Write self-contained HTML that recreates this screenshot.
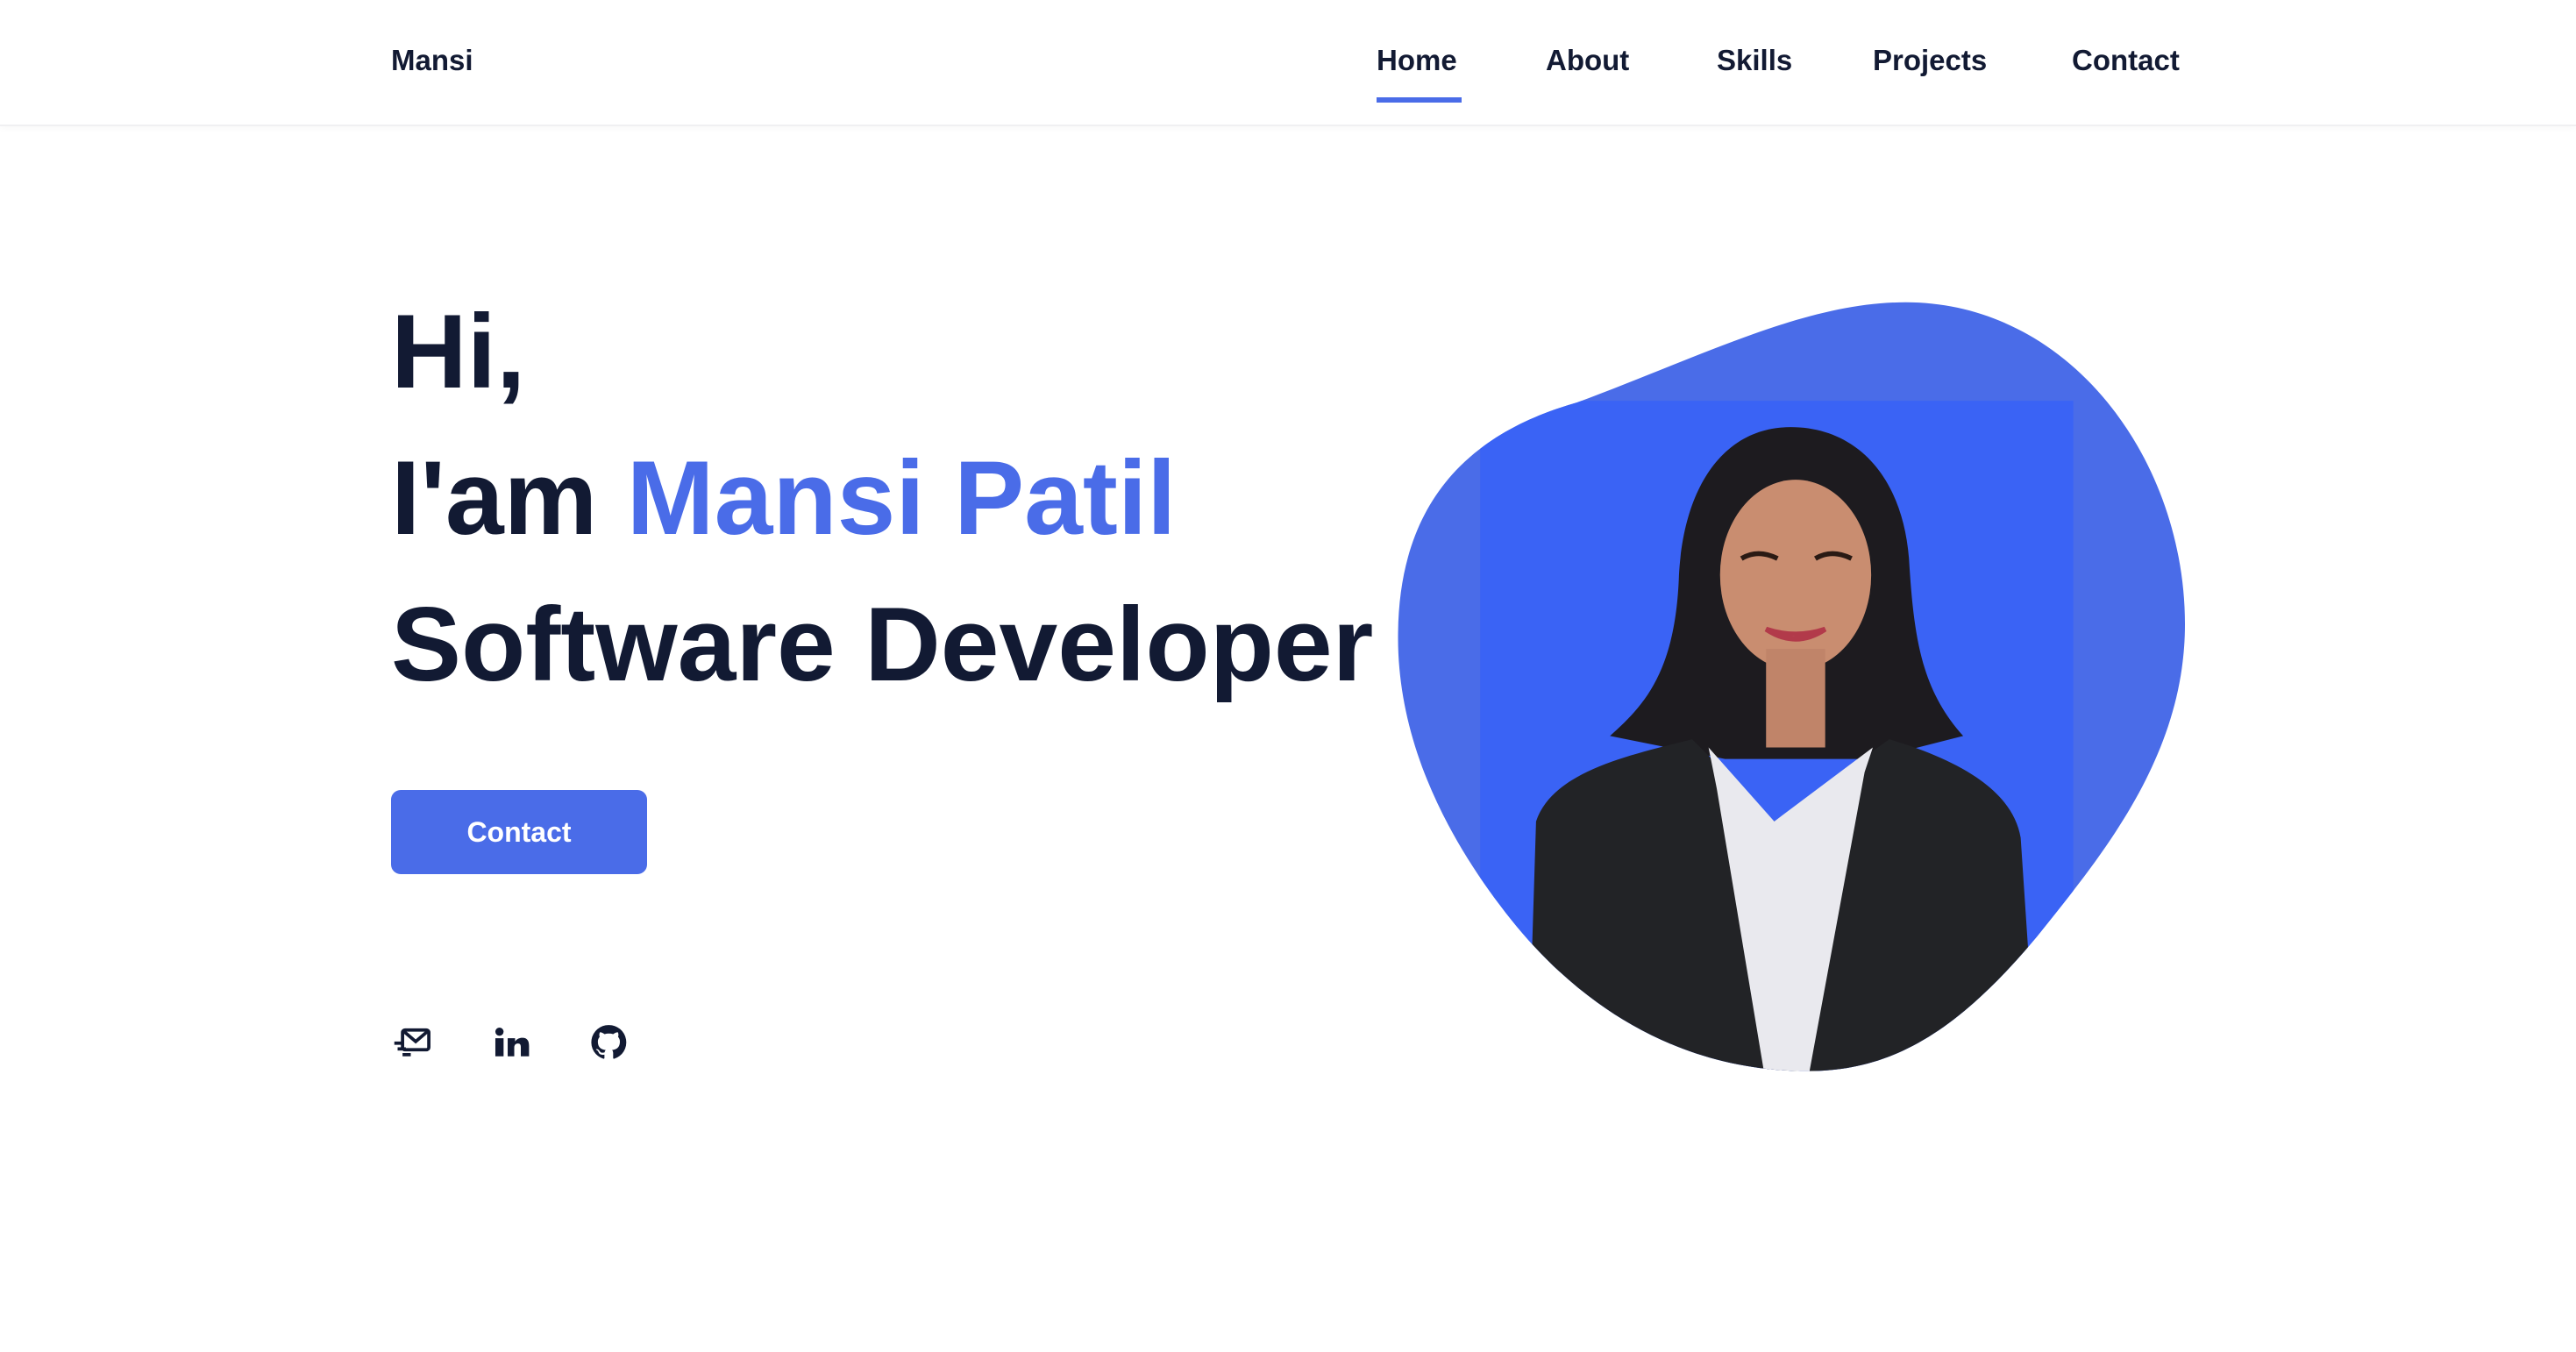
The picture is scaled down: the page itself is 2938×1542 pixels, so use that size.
<!DOCTYPE html>
<html><head><meta charset="utf-8"><style>
html,body{margin:0;padding:0;width:2938px;height:1542px;overflow:hidden;background:#fff;font-family:"Liberation Sans",Arial,sans-serif;color:#121a33}
.hdr{position:absolute;left:0;top:0;width:2938px;height:142px;border-bottom:2px solid #f0f0f2;box-shadow:0 2px 8px rgba(0,0,0,.03)}
.t{position:absolute;font-weight:bold;white-space:nowrap}
.nav{font-size:33px;top:50px}
h1{margin:0;position:absolute;font-size:120px;font-weight:bold;line-height:1;white-space:nowrap;left:446px;color:#121a33}
.btn{position:absolute;left:446px;top:901px;width:292px;height:96px;background:#4a6ce8;border-radius:11px;color:#fff;font-size:32px;font-weight:bold;text-align:center;line-height:96px}
</style></head><body>
<div class="hdr"></div>
<div class="t" style="left:446px;top:50px;font-size:33px">Mansi</div>
<div class="t nav" style="left:1570px">Home</div>
<div style="position:absolute;left:1570px;top:111px;width:97px;height:6px;background:#4a6ce8"></div>
<div class="t nav" style="left:1763px">About</div>
<div class="t nav" style="left:1958px">Skills</div>
<div class="t nav" style="left:2136px">Projects</div>
<div class="t nav" style="left:2363px">Contact</div>

<h1 style="top:341px">Hi,</h1>
<h1 style="top:508px">I'am <span style="color:#4a6ce8">Mansi Patil</span></h1>
<h1 style="top:675px">Software Developer</h1>
<div class="btn">Contact</div>

<svg style="position:absolute;left:0;top:0" width="2938" height="1542" viewBox="0 0 1568 823">
<defs><clipPath id="b"><path d="M851,385 C852,300 900,262 960,245 C1040,215 1100,184 1160,184 C1260,184 1330,280 1330,380 C1330,460 1280,520 1240,570 C1190,630 1150,652 1100,652 C1020,652 960,610 920,560 C880,510 850,450 851,385 Z"/></clipPath></defs>
<path d="M851,385 C852,300 900,262 960,245 C1040,215 1100,184 1160,184 C1260,184 1330,280 1330,380 C1330,460 1280,520 1240,570 C1190,630 1150,652 1100,652 C1020,652 960,610 920,560 C880,510 850,450 851,385 Z" fill="#4a6ce8"/>
<g clip-path="url(#b)">
<rect x="901" y="244" width="361" height="420" fill="#3a63f5"/>
<path d="M1090,260 C1050,260 1025,295 1022,350 C1020,410 1000,430 980,448 L1050,462 L1140,462 L1195,448 C1170,420 1165,390 1162,340 C1158,290 1130,260 1090,260 Z" fill="#1d1b1f"/>
<ellipse cx="1093" cy="350" rx="46" ry="58" fill="#c98d70"/>
<rect x="1075" y="395" width="36" height="60" fill="#c08469"/>
<path d="M930,660 L935,500 C945,470 990,460 1030,450 L1080,500 L1150,450 C1190,462 1225,480 1230,510 L1240,660 Z" fill="#222326"/>
<path d="M1040,455 L1080,500 L1140,455 L1135,470 L1100,660 L1075,660 L1045,480 Z" fill="#e9e9ee"/>
<path d="M1060,340 q10,-6 22,0 M1105,340 q10,-6 22,0" stroke="#2a1a14" stroke-width="3" fill="none"/>
<path d="M1075,383 q18,12 36,0 q-18,6 -36,0z" fill="#fff" stroke="#b23a4a" stroke-width="3"/>
</g>
<g fill="#121a33">
<rect x="245" y="627" width="16" height="12" rx="1.5" fill="none" stroke="#121a33" stroke-width="2"/>
<path d="M246,628 L253,634 L260,628" fill="none" stroke="#121a33" stroke-width="2"/>
<rect x="240" y="634" width="5" height="2"/><rect x="242" y="637.5" width="5" height="2"/><rect x="245" y="641" width="5" height="2"/>
<circle cx="304" cy="628" r="2.5"/><rect x="301.5" y="632" width="5" height="11"/>
<path d="M309,632 h4.5 v2 c1,-1.6 2.6,-2.3 4.5,-2.3 c3,0 4,2 4,5 v6.3 h-5 v-5.5 c0,-1.4 -.4,-2.3 -1.8,-2.3 c-1.4,0 -2.2,1 -2.2,2.5 v5.3 h-4z"/>
<path d="M370.5,624 a10.5,10.5 0 0 0 -3.3,20.5 c.5,.1 .7,-.2 .7,-.5 v-2 c-2.9,.6 -3.5,-1.3 -3.5,-1.3 c-.5,-1.2 -1.2,-1.5 -1.2,-1.5 c-1,-.6 .1,-.6 .1,-.6 c1,.1 1.6,1.1 1.6,1.1 c.9,1.6 2.5,1.1 3.1,.9 c.1,-.7 .4,-1.1 .7,-1.4 c-2.3,-.3 -4.8,-1.2 -4.8,-5.2 c0,-1.1 .4,-2.1 1.1,-2.8 c-.1,-.3 -.5,-1.3 .1,-2.8 c0,0 .9,-.3 2.9,1.1 a10,10 0 0 1 5.2,0 c2,-1.4 2.9,-1.1 2.9,-1.1 c.6,1.5 .2,2.5 .1,2.8 c.7,.7 1.1,1.7 1.1,2.8 c0,4 -2.5,4.9 -4.8,5.2 c.4,.3 .7,1 .7,1.9 v2.9 c0,.3 .2,.6 .7,.5 a10.5,10.5 0 0 0 -3.4,-20.5z"/>
</g>
</svg>
</body></html>
